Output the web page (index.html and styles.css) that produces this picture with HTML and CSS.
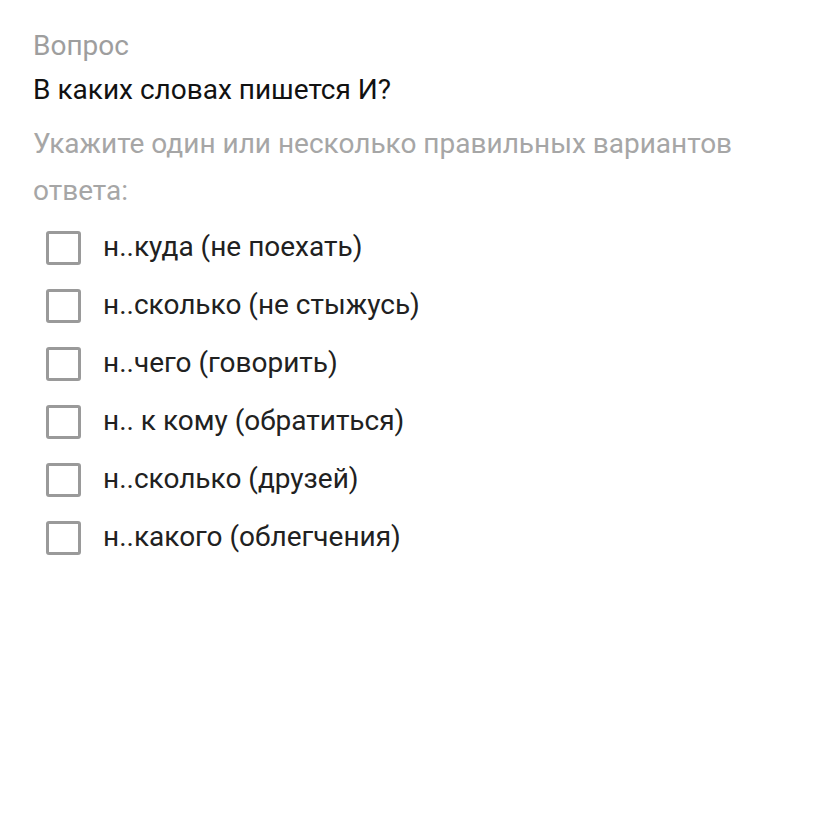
FILE: index.html
```html
<!DOCTYPE html>
<html lang="ru">
<head>
<meta charset="utf-8">
<link rel="stylesheet" href="styles.css">
</head>
<body>
<div class="quiz">
  <div class="label">Вопрос</div>
  <div class="question">В каких словах пишется И?</div>
  <div class="hint">Укажите один или несколько правильных вариантов ответа:</div>
  <ul class="options">
    <li class="option"><span class="box"></span><span class="text">н..куда (не поехать)</span></li>
    <li class="option"><span class="box"></span><span class="text">н..сколько (не стыжусь)</span></li>
    <li class="option"><span class="box"></span><span class="text">н..чего (говорить)</span></li>
    <li class="option"><span class="box"></span><span class="text">н.. к кому (обратиться)</span></li>
    <li class="option"><span class="box"></span><span class="text">н..сколько (друзей)</span></li>
    <li class="option"><span class="box"></span><span class="text">н..какого (облегчения)</span></li>
  </ul>
</div>
</body>
</html>
```
FILE: styles.css
```css
html, body {
  margin: 0;
  padding: 0;
  background: #ffffff;
}
body {
  font-family: Roboto, "Noto Sans", sans-serif;
  font-size: 28px;
}
.quiz {
  padding: 28px 33px 0 33px;
  width: 740px;
}
.label {
  color: #9e9e9e;
  line-height: 36px;
}
.question {
  color: #111111;
  line-height: 36px;
  margin-top: 8px;
}
.hint {
  color: #a6a6a6;
  line-height: 47px;
  margin-top: 12px;
}
.options {
  list-style: none;
  margin: 5px 0 0 0;
  padding: 0;
}
.option {
  display: flex;
  align-items: center;
  height: 58px;
  color: #212121;
}
.box {
  box-sizing: border-box;
  width: 35px;
  height: 34px;
  border: 3px solid #9a9a9a;
  border-radius: 3px;
  margin-left: 13px;
  margin-right: 22px;
  flex: none;
}
.text {
  line-height: 36px;
  margin-bottom: 2px;
}
```
